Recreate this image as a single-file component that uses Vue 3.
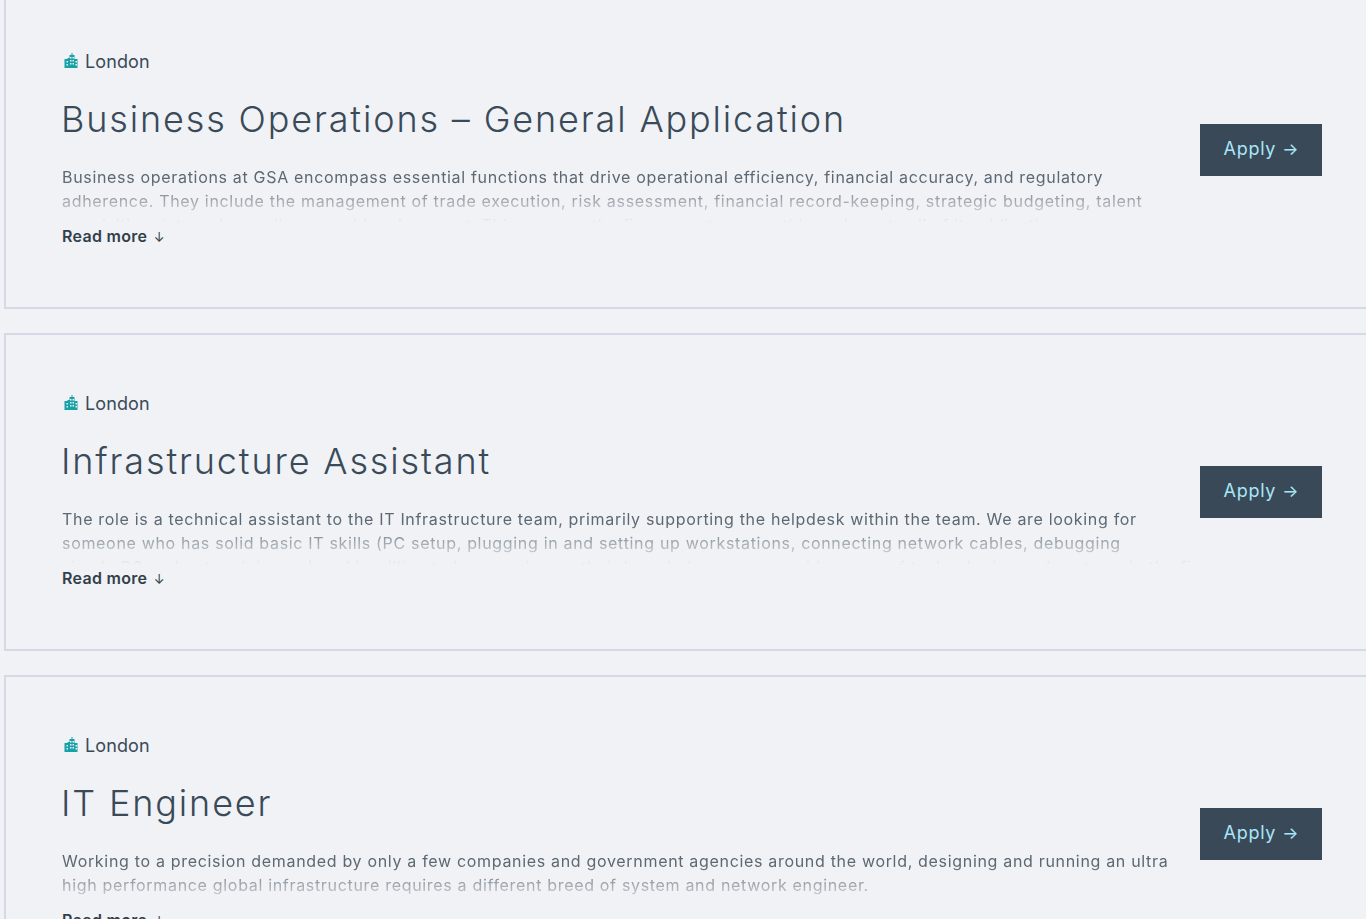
<script setup>
const jobs = [
  { title: 'Business Operations – General Application', lines: [
    'Business operations at GSA encompass essential functions that drive operational efficiency, financial accuracy, and regulatory',
    'adherence. They include the management of trade execution, risk assessment, financial record-keeping, strategic budgeting, talent',
    'acquisition, internal compliance and legal support. This ensures the firm operates smoothly and meets all of its obligations.' ] },
  { title: 'Infrastructure Assistant', lines: [
    'The role is a technical assistant to the IT Infrastructure team, primarily supporting the helpdesk within the team. We are looking for',
    'someone who has solid basic IT skills (PC setup, plugging in and setting up workstations, connecting network cables, debugging',
    'simple PC and network issues) and is willing to learn and grow their knowledge across a wide range of technologies and systems in the firm.' ] },
  { title: 'IT Engineer', lines: [
    'Working to a precision demanded by only a few companies and government agencies around the world, designing and running an ultra',
    'high performance global infrastructure requires a different breed of system and network engineer.' ] },
]
</script>

<template>
  <main class="list">
    <article v-for="job in jobs" :key="job.title" class="card">
      <div class="info">
        <div class="loc">
          <svg class="city" viewBox="1 0 14 15" width="15" height="15" aria-hidden="true">
            <path fill="#17a2a8" fill-rule="evenodd" d="M1 6h3V5h2V2h2V0h1v2h2v4h3v9H1zM3 8v1.500h1.500V8zm0 3v1.500h1.500V11zM6.500 4v1.500H8V4zm2.500 0v1.500h1.500V4zM6.500 7v1.500H8V7zm2.500 0v1.500h1.500V7zM6.500 10v1.500H8V10zm2.500 0v1.500h1.500V10zM12 8v1.500h1.500V8zm0 3v1.500h1.500V11z"/>
          </svg>
          <span>London</span>
        </div>
        <h2 class="title">{{ job.title }}</h2>
        <div class="desc">
          <p v-for="line in job.lines" :key="line">{{ line }}</p>
        </div>
        <a class="more">Read more <span class="down">↓</span></a>
      </div>
      <a class="apply"><span class="label">Apply</span> <span class="arrow">→</span></a>
    </article>
  </main>
</template>

<style>
html, body { margin: 0; background: #f0f2f6; overflow: hidden; height: 919px; }
</style>

<style scoped>
.list {
  display: flex; flex-direction: column; gap: 24px;
  margin: -9px 0 0 4px; width: 1500px;
  font-family: "Inter", "Liberation Sans", sans-serif; color: #3a4a58;
}
.card {
  box-sizing: border-box; height: 318px; border: 2px solid #d5d9e6;
  display: flex; align-items: center; padding: 0 0 0 56px;
}
.info { width: 1138px; display: flex; flex-direction: column; align-self: flex-start; padding-top: 56px; }
.loc { display: flex; align-items: center; gap: 6px; height: 24px; font-size: 18px; letter-spacing: 0.1px; }
.city { margin-left: 2px; margin-top: -1px; }
.title { margin: 23px 0 0 -1px; font-size: 36px; font-weight: 300; line-height: 46px; letter-spacing: 1.85px; white-space: nowrap; }
.desc {
  margin-top: 23px; height: 58px; overflow: hidden; font-size: 16px; line-height: 24px; color: #5c6873; letter-spacing: 0.68px;
  -webkit-mask-image: linear-gradient(#000 28%, rgba(0,0,0,0) 100%);
  mask-image: linear-gradient(#000 28%, rgba(0,0,0,0) 100%);
}
.desc p { margin: 0; white-space: nowrap; }
.more { margin-top: 2px; font-size: 16px; font-weight: 600; line-height: 22px; letter-spacing: 0.3px; color: #333f4b; }
.down { font-weight: 400; font-size: 13px; margin-left: 2px; }
.apply {
  width: 122px; height: 52px; background: #394958; color: #a8e6f7;
  display: flex; align-items: center; justify-content: center; gap: 6px; font-size: 18px; flex: none;
}
.label { letter-spacing: 0.7px; padding-bottom: 4px; }
.arrow { font-size: 17px; padding-bottom: 2px; }
</style>
